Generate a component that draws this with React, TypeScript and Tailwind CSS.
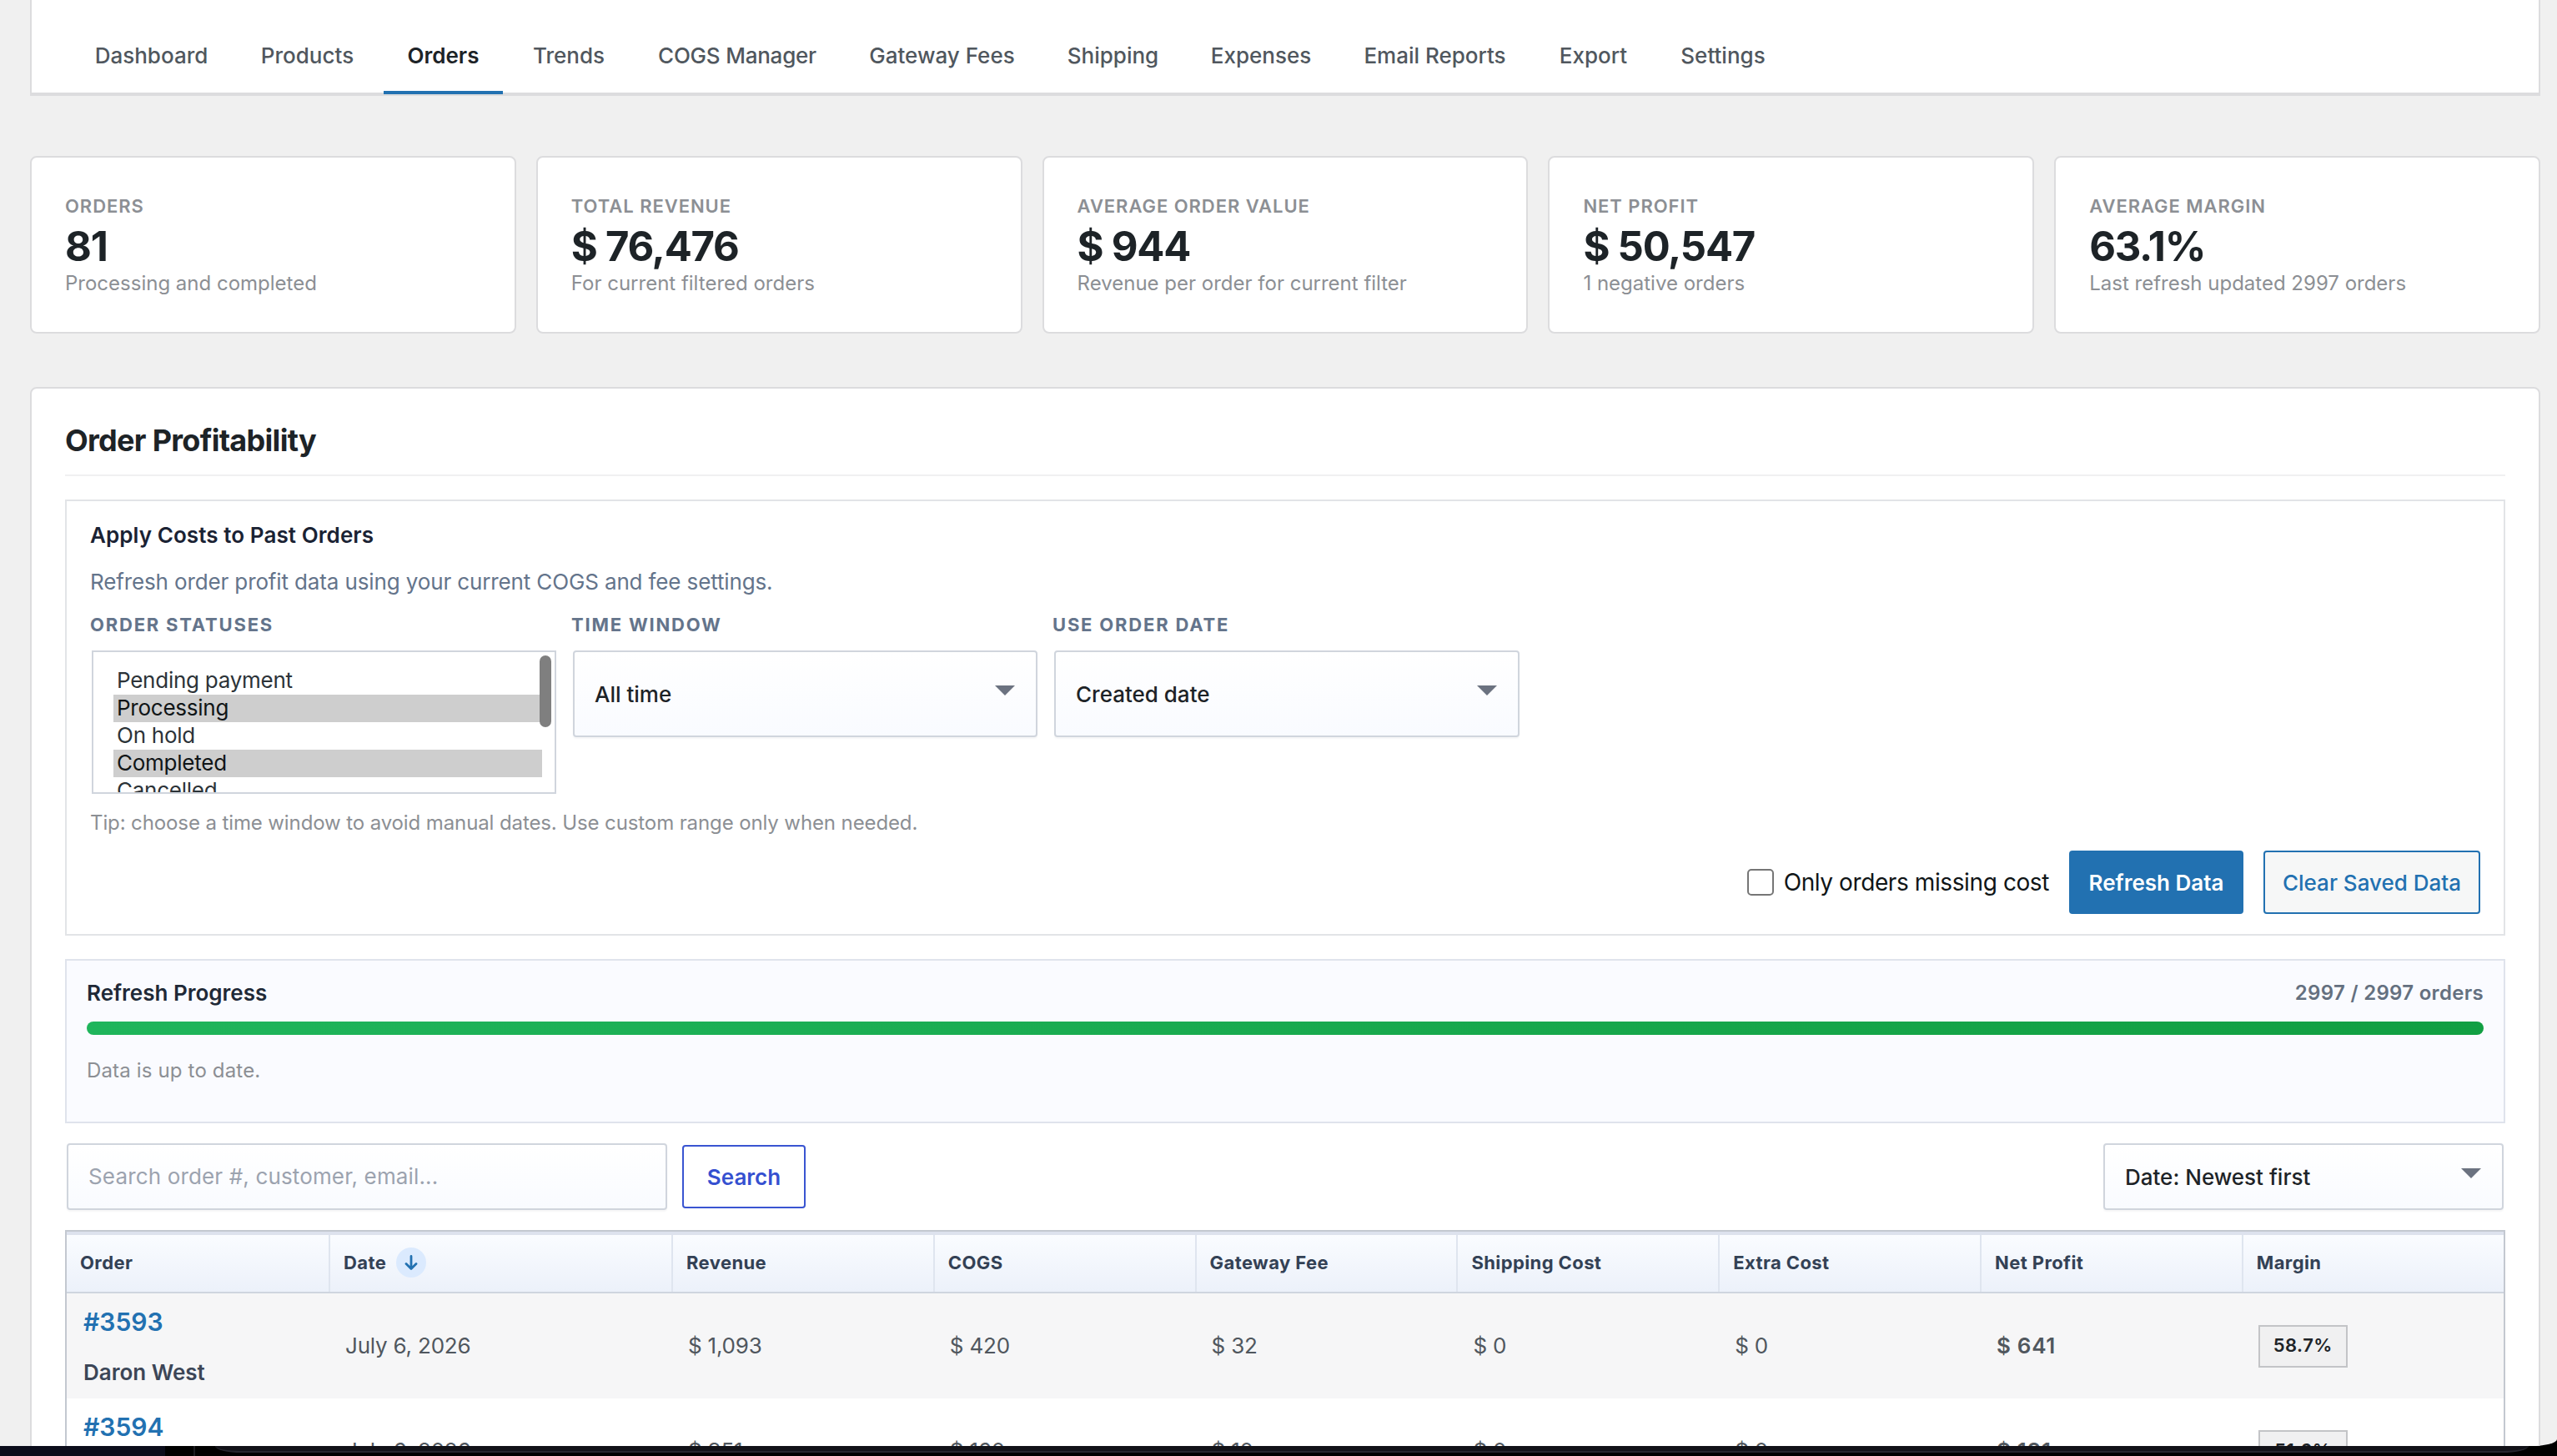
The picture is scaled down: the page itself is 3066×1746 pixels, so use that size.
import React, { useState } from "react";
import clsx from "clsx";

const tabs = [
  { label: "Dashboard", width: "w-[191px]" },
  { label: "Products", width: "w-[167px]" },
  { label: "Orders", width: "w-[143px]" },
  { label: "Trends", width: "w-[142px]" },
  { label: "COGS Manager", width: "w-[246px] tracking-[-0.22px]" },
  { label: "Gateway Fees", width: "w-[229px]" },
  { label: "Shipping", width: "w-[165px]" },
  { label: "Expenses", width: "w-[174px]" },
  { label: "Email Reports", width: "w-[227px]" },
  { label: "Export", width: "w-[137px]" },
  { label: "Settings", width: "w-[158px]" },
];

const stats = [
  { label: "Orders", value: "81", note: "Processing and completed" },
  { label: "Total Revenue", value: "$ 76,476", note: "For current filtered orders" },
  { label: "Average Order Value", value: "$ 944", note: "Revenue per order for current filter" },
  { label: "Net Profit", value: "$ 50,547", note: "1 negative orders" },
  { label: "Average Margin", value: "63.1%", note: "Last refresh updated 2997 orders" },
];

const statuses = ["Pending payment", "Processing", "On hold", "Completed", "Cancelled"];

const columns = [
  "Order",
  "Date",
  "Revenue",
  "COGS",
  "Gateway Fee",
  "Shipping Cost",
  "Extra Cost",
  "Net Profit",
  "Margin",
];

const orders = [
  {
    id: "#3593",
    customer: "Daron West",
    cells: ["July 6, 2026", "$ 1,093", "$ 420", "$ 32", "$ 0", "$ 0"],
    profit: "$ 641",
    margin: "58.7%",
  },
  {
    id: "#3594",
    customer: "",
    cells: ["July 6, 2026", "$ 351", "$ 160", "$ 10", "$ 0", "$ 0"],
    profit: "$ 181",
    margin: "51.6%",
  },
];

const tableGrid = "grid grid-cols-[316px_411px_repeat(6,313.8px)_1fr]";

function SelectBox({ value, className }: { value: string; className?: string }) {
  return (
    <button
      className={clsx(
        "flex items-center justify-between rounded-[4px] border-2 border-[#d0d5dd] bg-linear-to-b from-white to-[#f9fbff] pr-[25px] pl-6 text-[26px] font-medium text-[#1d2327] shadow-[0_2px_2px_rgba(16,24,40,0.04)]",
        className
      )}
    >
      {value}
      <svg className="mb-2 h-3 w-6" viewBox="0 0 24 12" fill="#6b7280">
        <path d="M0 0h24L12 12z" />
      </svg>
    </button>
  );
}

function FieldLabel({ children }: { children: React.ReactNode }) {
  return (
    <div className="mb-[17px] text-[22px] leading-7 font-bold tracking-[1.8px] text-[#64748b] uppercase">
      {children}
    </div>
  );
}

export default function App() {
  const [activeTab, setActiveTab] = useState("Orders");
  const [selected, setSelected] = useState(["Processing", "Completed"]);
  const [missingOnly, setMissingOnly] = useState(false);

  const toggleStatus = (name: string) => {
    setSelected((prev) =>
      prev.includes(name) ? prev.filter((s) => s !== name) : [...prev, name]
    );
  };

  return (
    <div className="h-[1746px] w-[3066px] overflow-hidden bg-black font-[Inter,sans-serif]">
      <div className="h-[1734px] overflow-hidden bg-[#f0f0f0] pr-5 pl-9 [border-bottom-right-radius:32px_8px]">
        {/* NAV */}
        <div className="h-[115px] border-x-2 border-b-2 border-[#dcdcde] bg-white">
          <nav className="flex h-[113px] items-end gap-2 border-b-2 border-[#dcdcde] pl-12">
            {tabs.map((tab) => (
              <button
                key={tab.label}
                onClick={() => setActiveTab(tab.label)}
                className={clsx(
                  "-mb-[2px] shrink-0 border-b-4 pb-[26px] text-center text-[26px] leading-8 whitespace-nowrap",
                  tab.width,
                  activeTab === tab.label
                    ? "border-[#2271b1] font-semibold text-[#1d2327]"
                    : "border-transparent font-medium text-[#50575e]"
                )}
              >
                {tab.label}
              </button>
            ))}
          </nav>
        </div>

        {/* STATS */}
        <div className="mt-[72px] grid grid-cols-5 gap-6">
          {stats.map((s) => (
            <div
              key={s.label}
              className="h-[213px] rounded-[8px] border-2 border-[#dcdcde] bg-white px-10 pt-[43px]"
            >
              <div className="text-[22px] leading-[30px] font-semibold tracking-[0.95px] text-[#8c8f94] uppercase">
                {s.label}
              </div>
              <div className="mt-1.5 text-[49px] leading-[56px] font-bold tracking-[-1.25px] text-[#1d2327]">
                {s.value}
              </div>
              <div className="text-[24px] leading-8 text-[#8c8f94]">{s.note}</div>
            </div>
          ))}
        </div>

        {/* ORDER PROFITABILITY */}
        <div className="mt-16 h-[1400px] rounded-[8px] border-2 border-[#dcdcde] bg-white px-10 pt-10">
          <h2 className="border-b-2 border-[#f0f0f1] pb-[19px] text-[36px] leading-[44px] font-bold tracking-[-0.7px] text-[#1d2327]">
            Order Profitability
          </h2>

          <section className="mt-7 h-[523px] border-2 border-[#e2e4e7] px-7 pt-[23px]">
            <h3 className="text-[26px] leading-9 font-semibold tracking-[0.08px] text-[#1a2233]">
              Apply Costs to Past Orders
            </h3>
            <p className="mt-5 text-[26px] leading-9 tracking-[-0.13px] text-[#64748b]">
              Refresh order profit data using your current COGS and fee settings.
            </p>

            <div className="mt-[19px] flex items-start gap-4">
              <div className="w-[561px]">
                <FieldLabel>Order Statuses</FieldLabel>
                <div className="relative mx-0.5 h-[172px] overflow-hidden border-2 border-[#d0d5dd] pt-[18px] pr-[15px] pl-6">
                  {statuses.map((name) => (
                    <div
                      key={name}
                      onClick={() => toggleStatus(name)}
                      className={clsx(
                        "h-[33px] cursor-default pl-1 text-[26px] leading-8 tracking-[-0.25px]",
                        selected.includes(name) ? "bg-[#cecece] text-[#101517]" : "text-[#2c3338]"
                      )}
                    >
                      {name}
                    </div>
                  ))}
                  {/* scrollbar thumb */}
                  <span className="absolute top-1 right-1 h-[86px] w-[14px] rounded-full bg-[#7f7f7f]" />
                </div>
              </div>
              <div className="w-[561px]">
                <FieldLabel>Time Window</FieldLabel>
                <SelectBox value="All time" className="mx-0.5 h-[104px] w-[557px]" />
              </div>
              <div className="w-[561px]">
                <FieldLabel>Use Order Date</FieldLabel>
                <SelectBox value="Created date" className="mx-0.5 h-[104px] w-[558px]" />
              </div>
            </div>

            <p className="mt-[19px] text-[24px] leading-8 tracking-[-0.11px] text-[#8c8f94]">
              Tip: choose a time window to avoid manual dates. Use custom range only when needed.
            </p>

            <div className="mt-[17px] flex items-center justify-end gap-6">
              <label className="flex items-center gap-3 text-[28px] leading-9 tracking-[-0.4px] text-[#101517]">
                <input
                  type="checkbox"
                  checked={missingOnly}
                  onChange={() => setMissingOnly(!missingOnly)}
                  className="size-8 appearance-none rounded-[5px] border-2 border-[#767676] bg-white"
                />
                Only orders missing cost
              </label>
              <button className="h-[76px] w-[209px] rounded-[4px] bg-[#2271b1] text-[26px] font-semibold text-white">
                Refresh Data
              </button>
              <button className="h-[76px] w-[260px] rounded-[4px] border-2 border-[#2271b1] bg-[#f6f7f7] text-[26px] font-medium text-[#2271b1]">
                Clear Saved Data
              </button>
            </div>
          </section>

          <section className="mt-7 h-[197px] border-2 border-[#dfe3ec] bg-[#fafbff] px-6 pt-[21px]">
            <div className="flex items-center justify-between leading-9 font-semibold">
              <span className="text-[26px] text-[#1f2937]">Refresh Progress</span>
              <span className="text-[24px] tracking-[0.3px] text-[#64707f]">2997 / 2997 orders</span>
            </div>
            <div className="mt-4 h-4 rounded-full bg-linear-to-r from-[#1fb55b] to-[#119f42]" />
            <p className="mt-[27px] text-[24px] leading-8 tracking-[0.16px] text-[#8c8f94]">
              Data is up to date.
            </p>
          </section>

          {/* TOOLBAR */}
          <div className="mt-6 flex items-center px-0.5">
            <input
              type="text"
              placeholder="Search order #, customer, email..."
              className="h-20 w-[720px] rounded-[4px] border-2 border-[#d0d5dd] bg-linear-to-b from-white to-[#f9fbff] px-6 pb-0.5 text-[26px] tracking-[0.15px] text-[#1d2327] shadow-[0_2px_2px_rgba(16,24,40,0.04)] outline-none placeholder:text-[#9ca3af]"
            />
            <button className="ml-[18px] h-[76px] w-[148px] rounded-[4px] border-2 border-[#3a55d1] bg-white text-[26px] font-semibold text-[#3550d0]">
              Search
            </button>
            <SelectBox value="Date: Newest first" className="ml-auto h-20 w-[480px] pl-6" />
          </div>

          {/* ORDERS TABLE */}
          <div className="mt-6 border-2 border-[#c3c8d0]">
            <div
              className={clsx(
                tableGrid,
                "h-[74px] border-t-4 border-b-2 border-t-[#dde2ed] border-b-[#cfd5df] bg-linear-to-b from-[#fafcff] to-[#ecf1fa]"
              )}
            >
              {columns.map((name, i) => (
                <div
                  key={name}
                  className={clsx(
                    "flex items-center pb-0.5 pl-4 text-[22px] font-bold tracking-[0.4px] text-[#334155]",
                    i < columns.length - 1 && "border-r-2 border-[#dfe5ef]"
                  )}
                >
                  {name}
                  {name === "Date" && (
                    <span className="ml-3 flex size-9 items-center justify-center rounded-full bg-[#dbeafe]">
                      <svg
                        className="size-[18px]"
                        viewBox="0 0 18 18"
                        fill="none"
                        stroke="#2271b1"
                        strokeWidth="2.8"
                        strokeLinecap="round"
                        strokeLinejoin="round"
                      >
                        <path d="M9 1.5v15M3 10.5l6 6 6-6" />
                      </svg>
                    </span>
                  )}
                </div>
              ))}
            </div>

            {orders.map((order, i) => (
              <div
                key={order.id}
                className={clsx(
                  tableGrid,
                  "h-[126px] items-center text-[26px] text-[#50575e]",
                  i % 2 === 0 ? "bg-[#f6f6f7]" : "bg-white"
                )}
              >
                <div className="h-full pt-[14px] pl-5 font-semibold">
                  <a className="block text-[30px] leading-10 text-[#2271b1]">{order.id}</a>
                  <div className="mt-[23px] leading-9 text-[#3c4657]">{order.customer}</div>
                </div>
                {order.cells.map((cell, j) => (
                  <div key={j} className="pb-0.5 pl-[18px] tracking-[-0.2px]">
                    {cell}
                  </div>
                ))}
                <div className="pb-0.5 pl-[18px] font-semibold tracking-[0.7px]">{order.profit}</div>
                <div className="pl-[18px]">
                  <span className="flex h-[51px] w-[107px] items-center justify-center border-2 border-[#c3c4c7] bg-[#f0f0f1] pb-0.5 text-[22px] font-semibold tracking-[0.5px] text-[#1d2327]">
                    {order.margin}
                  </span>
                </div>
              </div>
            ))}
          </div>
        </div>
      </div>

      {/* DEVICE EDGE */}
      <div className="flex h-3">
        <div className="w-[198px] bg-[#0c0d1b]" />
        <div className="ml-[34px] w-0.5 bg-[#1c1c20]" />
        <div className="mr-[34px] ml-[24px] h-2 flex-1 border-b-2 border-[#26262e] bg-[#121218] [border-bottom-left-radius:32px_8px] [border-bottom-right-radius:32px_8px]" />
      </div>
    </div>
  );
}
